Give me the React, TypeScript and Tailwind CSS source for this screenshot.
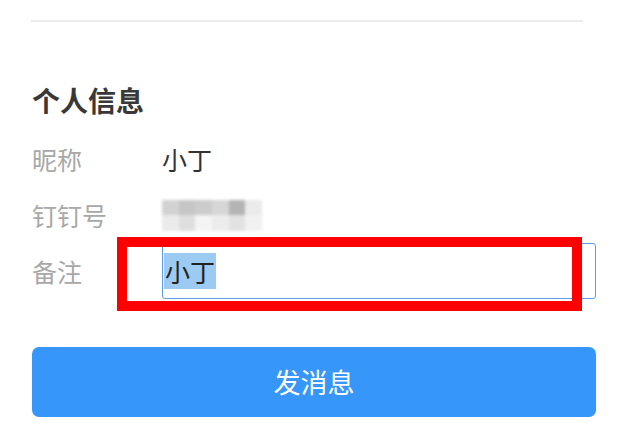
const BLUR_CELLS = [
  "#d2d2d2", "#c6c6c6", "#cccccc", "#d6d6d6", "#b4b4b4", "#ebebeb",
  "#ebebeb", "#dedede", "#f4f4f4", "#ececec", "#e2e2e2", "#f1f1f1",
];

function InfoRow({ label, children }: { label: string; children: React.ReactNode }) {
  return (
    <div className="relative flex h-[56px] items-center">
      <span className="w-[130px] shrink-0 text-[25px] leading-none text-[#a8a8a8]">{label}</span>
      {children}
    </div>
  );
}

export default function App() {
  return (
    <div className="relative h-[440px] w-[628px] overflow-hidden bg-white pt-[20px] font-['Noto_Sans_CJK_SC','Noto_Sans',sans-serif]">
      <div className="ml-[31px] h-[2px] w-[552px] bg-[#ececec]" />

      <div className="px-[32px]">
        <h3 className="mt-[60px] text-[28px] font-bold leading-[36px] text-[#383838]">个人信息</h3>

        <div className="mt-[13px]">
          <InfoRow label="昵称">
            <span className="text-[25px] leading-none text-[#333]">小丁</span>
          </InfoRow>

          <InfoRow label="钉钉号">
            <div className="grid h-[31px] w-[100px] grid-cols-6 grid-rows-2 blur-[1.5px]">
              {BLUR_CELLS.map((c, i) => (
                <div key={i} style={{ backgroundColor: c }} />
              ))}
            </div>
          </InfoRow>

          <InfoRow label="备注">
            <div className="flex h-[56px] w-[434px] items-center rounded-[3px] border border-[#5e9de3] pl-[1px]">
              <span className="bg-[#9ccaf0] px-[1px] text-[25px] leading-[36px] text-[#222]">小丁</span>
            </div>
            <div className="absolute left-[85px] top-[-6px] h-[74px] w-[465px] border-[10px] border-[#ff0000]" />
          </InfoRow>
        </div>

        <button className="mt-[48px] flex h-[70px] w-[564px] items-center justify-center rounded-[7px] bg-[#3796f9] text-[27px] text-white">
          发消息
        </button>
      </div>
    </div>
  );
}
